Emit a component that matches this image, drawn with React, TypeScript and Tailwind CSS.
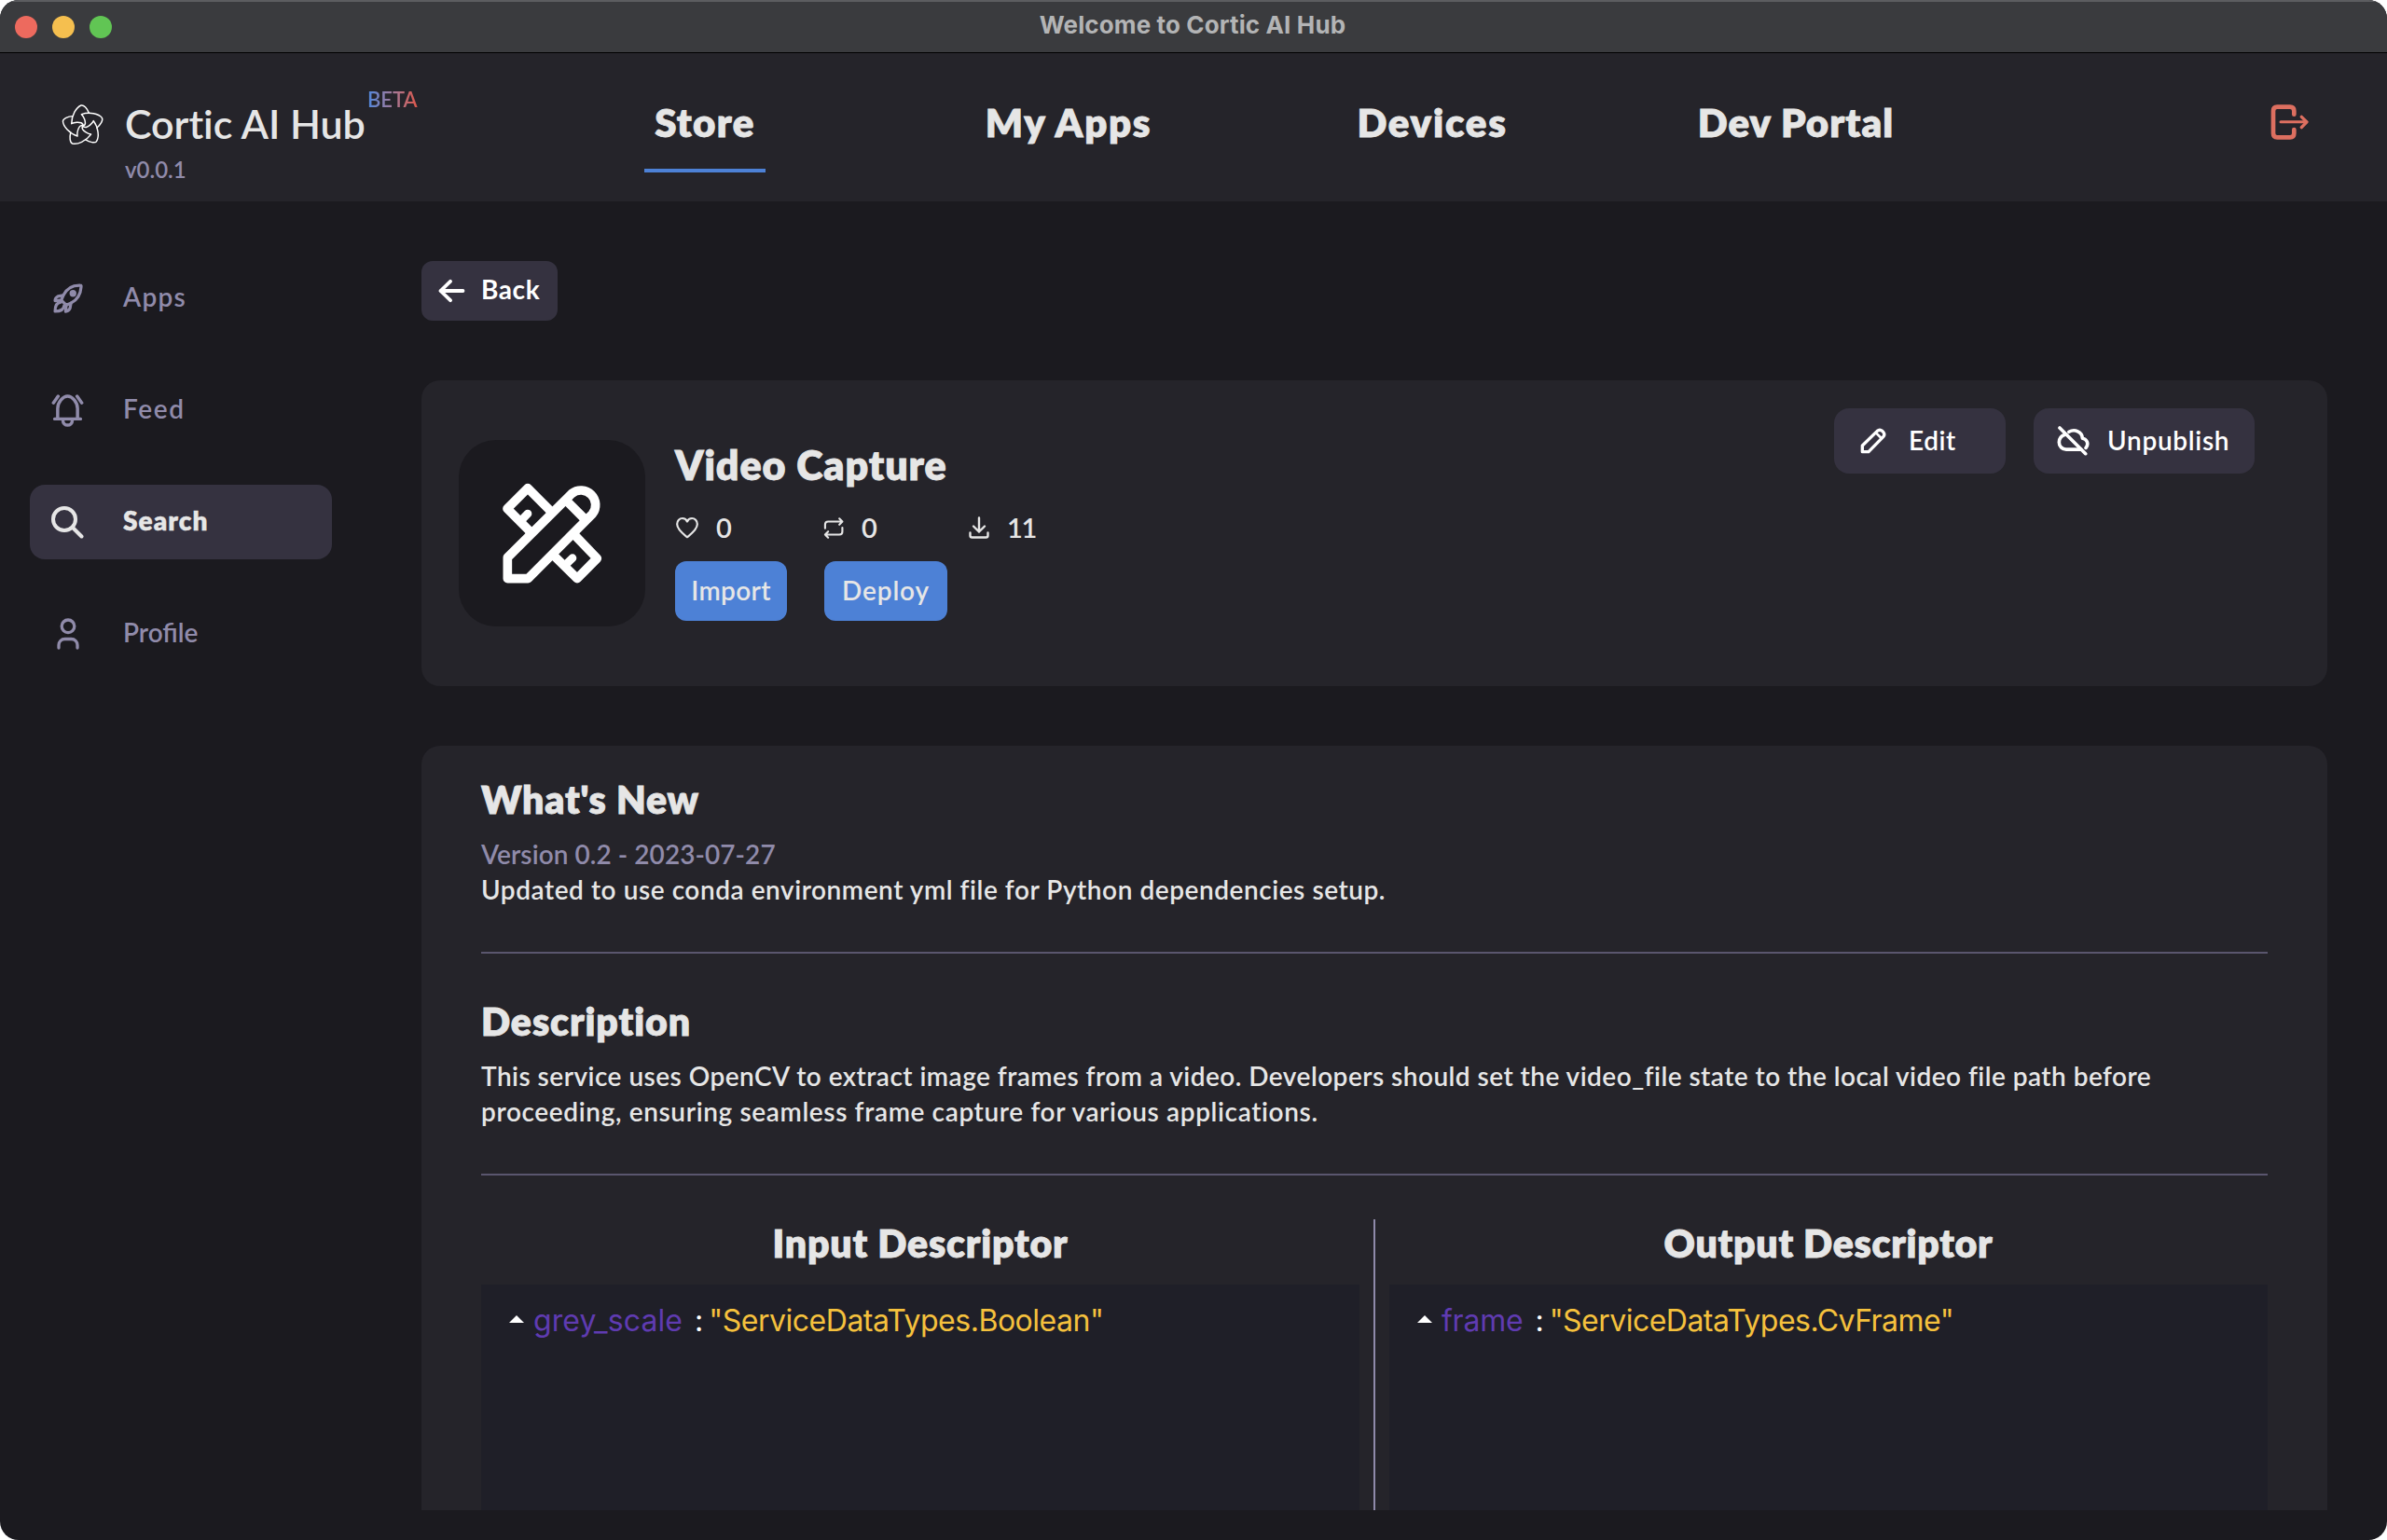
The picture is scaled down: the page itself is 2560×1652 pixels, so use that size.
import type { ReactNode } from "react";

function CorticLogo() {
  const petal =
    "M20 -42 C14 -57 3 -70 -6 -68 C-22 -62 -38 -35 -38 -7 C-28 -13 -12 -12 -6 -10 C-1 -8 1 -4 1 2";
  return (
    <svg className="mt-[55px] h-[46px] w-[46px] shrink-0" viewBox="-71 -71 142 142" fill="none" stroke="#ffffff" strokeWidth="4.500" strokeLinejoin="round" strokeLinecap="round">
      {[0, 72, 144, 216, 288].map((a) => (
        <path key={a} d={petal} transform={`rotate(${a})`} />
      ))}
    </svg>
  );
}

function LogoutIcon() {
  return (
    <svg className="h-[38px] w-[41px]" viewBox="1336 65 123 114" fill="none" stroke="#dd6f60" strokeLinecap="round" strokeLinejoin="round">
      <path strokeWidth="14" d="M1412 97V86q0-13-13-13h-41q-13 0-13 13v72q0 13 13 13h41q13 0 13-13v-12" />
      <path strokeWidth="9" d="M1369 121.500H1450" />
      <path strokeWidth="10" d="M1436 105l17 16.500l-17 17.500" />
    </svg>
  );
}

function RocketIcon() {
  return (
    <svg className="h-[32px] w-[32px]" viewBox="0 0 31 31" fill="none" stroke="currentColor" strokeWidth="3.100" strokeLinecap="round" strokeLinejoin="round">
      <path d="M8.500 17.500L10.500 12.500C14 5 20 1.800 28 2C29.300 2 29.200 2.500 29 4C28.500 12 25.500 17 18.500 20.500L13.500 22.500Z" />
      <path d="M10.500 12.500L5 13.500Q2 15 2 18L8.500 17.500M18.500 20.500L17.500 26Q16 29 13 29.300L13.500 22.500" />
      <path d="M8 19.500C3 20 2 24 2 29C7 29 11 27.500 11.500 23" />
      <circle cx="20.600" cy="10.400" r="2" fill="currentColor" />
    </svg>
  );
}

function BellIcon() {
  return (
    <svg className="h-[35px] w-[35px]" viewBox="0 0 34 34.500" fill="none" stroke="currentColor" strokeWidth="3.400" strokeLinecap="round" strokeLinejoin="round">
      <path d="M6.500 25.500V15C6.500 8.500 12 2 17 2s10.500 6.500 10.500 13v10.500" />
      <path d="M3.300 26h27.400M12 27c0 7.500 10 7.500 10 0M7 2L2 9M27 2l5 7" />
    </svg>
  );
}

function SearchIcon() {
  return (
    <svg className="h-[35px] w-[35px]" viewBox="0 0 35 35" fill="none" stroke="currentColor" strokeWidth="4" strokeLinecap="round">
      <circle cx="14" cy="14" r="12" />
      <path d="M23 23l9.500 9.500" />
    </svg>
  );
}

function PersonIcon() {
  return (
    <svg className="h-[34px] w-[24px]" viewBox="0 0 24 34" fill="none" stroke="currentColor" strokeWidth="3.300" strokeLinecap="round">
      <circle cx="12" cy="8.800" r="6.800" />
      <path d="M2 32v-3a6.500 6.500 0 0 1 6.500-6.500h7a6.500 6.500 0 0 1 6.500 6.500v3" />
    </svg>
  );
}

function RulerPencilIcon() {
  return (
    <svg className="h-[110px] w-[110px]" viewBox="140 140 330 330" fill="none" stroke="#ffffff" strokeWidth="29" strokeLinecap="round" strokeLinejoin="round">
      <path d="M162 451V383L369 177A47 47 0 0 1 435 243L228 451Z" />
      <path d="M350 199L411 260M238 303L161 226L227 160L304 237M374 307L450 386L386 451L312 378" />
      <path strokeWidth="26" d="M206 264L227 242M350 405L371 385" />
    </svg>
  );
}

function HeartIcon() {
  return (
    <svg className="h-[26px] w-[26px]" viewBox="0 0 24 24" fill="none" stroke="currentColor" strokeWidth="2" strokeLinejoin="round">
      <path d="M12 21.500C9 19 2 14 2 8.600C2 5.200 4.400 2.800 7.300 2.800C9.400 2.800 11.200 4 12 6C12.800 4 14.600 2.800 16.700 2.800C19.600 2.800 22 5.200 22 8.600C22 14 15 19 12 21.500Z" />
    </svg>
  );
}

function RepeatIcon() {
  return (
    <svg className="h-[25px] w-[24px]" viewBox="1177 249 72 77" fill="none" stroke="currentColor" strokeWidth="6.500" strokeLinecap="round" strokeLinejoin="round">
      <path d="M1185 288V276q0-10 10-10h46M1232 256l10 10l-10 10M1242 286v13q0 10-10 10h-47M1195 299l-10 10l10 10" />
    </svg>
  );
}

function DownloadIcon() {
  return (
    <svg className="h-[24px] w-[22px]" viewBox="0 0 22 24" fill="none" stroke="currentColor" strokeWidth="2.400" strokeLinecap="round" strokeLinejoin="round">
      <path d="M11 1.500v15M5 10.500l6 6l6-6M1.500 17.500v3q0 2 2 2h15q2 0 2-2v-3" />
    </svg>
  );
}

function EditIcon() {
  return (
    <svg className="h-[28px] w-[28px]" viewBox="15 1107 84 84" fill="none" stroke="currentColor" strokeWidth="10" strokeLinecap="round" strokeLinejoin="round">
      <path d="M22 1184V1164L70 1117q8-7 16 0l3 3q7 8 0 16L42 1184Z" />
      <path strokeWidth="8" d="M66 1123L83 1140" />
    </svg>
  );
}

function CloudOffIcon() {
  return (
    <svg className="h-[32px] w-[35px]" viewBox="648 1099 106 97" fill="none" stroke="currentColor" strokeWidth="11" strokeLinecap="round" strokeLinejoin="round">
      <path d="M657 1105L741 1189" />
      <path d="M674 1127C662 1131 655 1140 655 1152C655 1165 665 1175 678 1175H726" />
      <path d="M687 1118C706 1107 730 1118 731 1139C745 1140 753 1158 742 1170" />
    </svg>
  );
}

function ArrowLeftIcon() {
  return (
    <svg className="h-[26px] w-[29px]" viewBox="0 0 29 26" fill="none" stroke="currentColor" strokeWidth="3.800" strokeLinecap="round" strokeLinejoin="round">
      <path d="M2.500 13H26.500M13 2.800L2.500 13L13 23.200" />
    </svg>
  );
}

function TitleBar() {
  return (
    <div className="grid h-[57px] shrink-0 grid-cols-3 items-center border-t-2 border-b border-t-[#5c5d60] border-b-black bg-[#3a3b3e] pb-[3px]">
      <div className="flex gap-4 pt-[2px] pl-4">
        <span className="size-6 rounded-full bg-[#ed6a5e]" />
        <span className="size-6 rounded-full bg-[#f5bf4f]" />
        <span className="size-6 rounded-full bg-[#61c554]" />
      </div>
      <div className="pr-[2px] pb-px text-center font-[Inter] text-[26px] leading-[32px] font-bold tracking-[0.13px] whitespace-nowrap text-[#b3b4b5]">
        Welcome to Cortic AI Hub
      </div>
    </div>
  );
}

function NavItem({ label, active, spacing }: { label: string; active?: boolean; spacing: string }) {
  return (
    <div className="flex justify-center">
      <a
        className={`border-b-4 px-[11px] pb-[25px] text-[42px] leading-[50px] font-extrabold whitespace-nowrap [-webkit-text-stroke:0.8px] ${spacing} ${
          active ? "border-[#4d81d6]" : "border-transparent"
        }`}
      >
        {label}
      </a>
    </div>
  );
}

function Header() {
  return (
    <header className="flex h-[159px] shrink-0 items-start bg-[#25242a]">
      <div className="flex w-[561px] shrink-0 pl-[66px]">
        <CorticLogo />
        <div className="relative ml-[22px] pt-[51px]">
          <div className="text-[43px] leading-[50px] font-semibold tracking-[-0.05px] whitespace-nowrap">Cortic AI Hub</div>
          <div className="mt-[9px] text-[24px] leading-[30px] font-semibold text-[#908baa]">v0.0.1</div>
          <div className="absolute top-[37px] left-[260px] bg-gradient-to-r from-[#4a86dc] to-[#dc5548] bg-clip-text text-[22px] leading-[26px] font-semibold text-transparent">
            BETA
          </div>
        </div>
      </div>
      <nav className="grid w-[1560px] shrink-0 grid-cols-4 pt-[49px]">
        <NavItem label="Store" active spacing="tracking-[1.35px]" />
        <NavItem label="My Apps" spacing="tracking-[1.7px]" />
        <NavItem label="Devices" spacing="tracking-[1.75px]" />
        <NavItem label="Dev Portal" spacing="tracking-[1.05px]" />
      </nav>
      <div className="ml-auto pt-[55px] pr-[84px]">
        <LogoutIcon />
      </div>
    </header>
  );
}

function SideItem({ icon, label, active, spacing }: { icon: ReactNode; label: string; active?: boolean; spacing: string }) {
  return (
    <div
      className={`flex h-20 w-[324px] items-center rounded-2xl pl-[23px] ${
        active ? "bg-[#353240] font-extrabold text-[#e6e6e6] [-webkit-text-stroke:0.4px]" : "font-semibold text-[#908baa]"
      }`}
    >
      <span className="flex w-[35px] justify-center">{icon}</span>
      <span className={`ml-[42px] pb-[4px] text-[28px] leading-[34px] ${spacing}`}>{label}</span>
    </div>
  );
}

function Sidebar() {
  return (
    <aside className="flex w-[452px] shrink-0 flex-col gap-10 pt-16 pl-8">
      <SideItem icon={<RocketIcon />} label="Apps" spacing="tracking-[1.24px]" />
      <SideItem icon={<BellIcon />} label="Feed" spacing="tracking-[1.6px]" />
      <SideItem icon={<SearchIcon />} label="Search" active spacing="tracking-[1.05px]" />
      <SideItem icon={<PersonIcon />} label="Profile" spacing="tracking-[0px]" />
    </aside>
  );
}

function AppCard() {
  return (
    <section className="mt-16 flex h-[328px] shrink-0 rounded-[20px] bg-[#25242a] pl-10">
      <div className="mt-16 flex size-[200px] items-center justify-center rounded-[40px] bg-[#1b1a1f]">
        <RulerPencilIcon />
      </div>
      <div className="ml-8 pt-[65px]">
        <h1 className="text-[43px] leading-[52px] font-extrabold tracking-[0.9px] [-webkit-text-stroke:0.8px]">Video Capture</h1>
        <div className="mt-[26px] flex h-[30px] items-center text-[29px] leading-[30px] font-semibold">
          <div className="flex w-[158px] items-center">
            <HeartIcon />
            <span className="ml-[18px]">0</span>
          </div>
          <div className="flex w-[157px] items-center">
            <RepeatIcon />
            <span className="ml-[18px]">0</span>
          </div>
          <div className="flex items-center">
            <DownloadIcon />
            <span className="ml-[19px] tracking-[-1.3px]">11</span>
          </div>
        </div>
        <div className="mt-[21px] flex gap-10 text-[28px] leading-[34px] font-semibold">
          <button className="flex h-16 w-[120px] items-center justify-center rounded-xl bg-[#4d81d6] pb-[2px] tracking-[0.35px]">Import</button>
          <button className="flex h-16 w-[132px] items-center justify-center rounded-xl bg-[#4d81d6] pb-[2px] tracking-[0.85px]">Deploy</button>
        </div>
      </div>
      <div className="mt-[30px] mr-[78px] ml-auto flex h-[70px] gap-[30px] text-[28px] leading-[34px] font-semibold text-white">
        <button className="flex w-[184px] items-center rounded-2xl bg-[#353240] pl-7">
          <EditIcon />
          <span className="ml-[24px] pb-[2px] tracking-[0.57px]">Edit</span>
        </button>
        <button className="flex w-[237px] items-center rounded-2xl bg-[#353240] pl-[25px]">
          <CloudOffIcon />
          <span className="ml-[19px] pb-[2px] tracking-[0.7px]">Unpublish</span>
        </button>
      </div>
    </section>
  );
}

function Descriptor({ title, spacing, name, value, nameSpacing, valueSpacing, className }: {
  title: string; spacing: string; name: string; value: string; nameSpacing: string; valueSpacing: string; className: string;
}) {
  return (
    <div className={`flex flex-1 flex-col ${className}`}>
      <h2 className={`pt-px text-center text-[41px] leading-[50px] font-extrabold [-webkit-text-stroke:0.8px] ${spacing}`}>{title}</h2>
      <div className="mt-[19px] flex flex-1 items-start bg-[#1f1f28] pt-[19px] pl-[30px] font-[Inter] text-[32px] leading-[40px]">
        <svg className="mt-[14px] h-2 w-4" viewBox="0 0 16 8" fill="#ffffff">
          <path d="M8 0L16 8H0Z" />
        </svg>
        <span className={`ml-[10px] text-[#5f3bb1] ${nameSpacing}`}>{name}</span>
        <span className="ml-[13px] text-white">:</span>
        <span className={`ml-[6px] whitespace-nowrap text-[#f5c13d] ${valueSpacing}`}>{value}</span>
      </div>
    </div>
  );
}

function DetailsCard() {
  return (
    <section className="mt-16 flex h-[820px] shrink-0 flex-col overflow-hidden rounded-t-[20px] bg-[#25242a] px-16 pt-[33px]">
      <h2 className="text-[41px] leading-[50px] font-extrabold tracking-[0.81px] [-webkit-text-stroke:0.8px]">What's New</h2>
      <div className="mt-[14px] text-[28px] leading-[38px] font-semibold tracking-[0.06px] text-[#908baa]">Version 0.2 - 2023-07-27</div>
      <div className="text-[28px] leading-[38px] font-semibold tracking-[0.55px] whitespace-nowrap">
        Updated to use conda environment yml file for Python dependencies setup.
      </div>
      <div className="mt-[48px] h-[2px] shrink-0 bg-[#5a566e]" />
      <h2 className="mt-[48px] text-[41px] leading-[50px] font-extrabold tracking-[0.92px] [-webkit-text-stroke:0.8px]">Description</h2>
      <div className="mt-[14px] text-[28px] leading-[38px] font-semibold whitespace-nowrap">
        <p className="tracking-[0.47px]">
          This service uses OpenCV to extract image frames from a video. Developers should set the video_file state to the local video file path before
        </p>
        <p className="tracking-[0.63px]">proceeding, ensuring seamless frame capture for various applications.</p>
      </div>
      <div className="mt-[48px] h-[2px] shrink-0 bg-[#5a566e]" />
      <div className="mt-[47px] flex flex-1">
        <Descriptor title="Input Descriptor" spacing="tracking-[0.8px]" name="grey_scale" value={'"ServiceDataTypes.Boolean"'} nameSpacing="tracking-[0.1px]" valueSpacing="tracking-[-0.48px]" className="pr-[15px]" />
        <div className="w-[2px] bg-[#8f8aaa]" />
        <Descriptor title="Output Descriptor" spacing="tracking-[0.72px]" name="frame" value={'"ServiceDataTypes.CvFrame"'} nameSpacing="tracking-[-0.22px]" valueSpacing="tracking-[-0.52px]" className="pl-[15px]" />
      </div>
    </section>
  );
}

export default function App() {
  return (
    <div className="h-[1652px] w-[2560px] bg-white">
      <div className="flex h-full flex-col overflow-hidden rounded-[20px] bg-[#1b1a1f] font-[Lato,sans-serif] text-[#e6e6e6]">
        <TitleBar />
        <Header />
        <div className="flex flex-1">
          <Sidebar />
          <main className="flex flex-1 flex-col pt-16 pr-16">
            <button className="flex h-16 w-[146px] shrink-0 items-center rounded-xl bg-[#353240] pl-[18px] text-[28px] leading-[34px] font-bold text-white">
              <ArrowLeftIcon />
              <span className="ml-[17px] pb-[4px] tracking-[0.6px]">Back</span>
            </button>
            <AppCard />
            <DetailsCard />
          </main>
        </div>
      </div>
    </div>
  );
}
